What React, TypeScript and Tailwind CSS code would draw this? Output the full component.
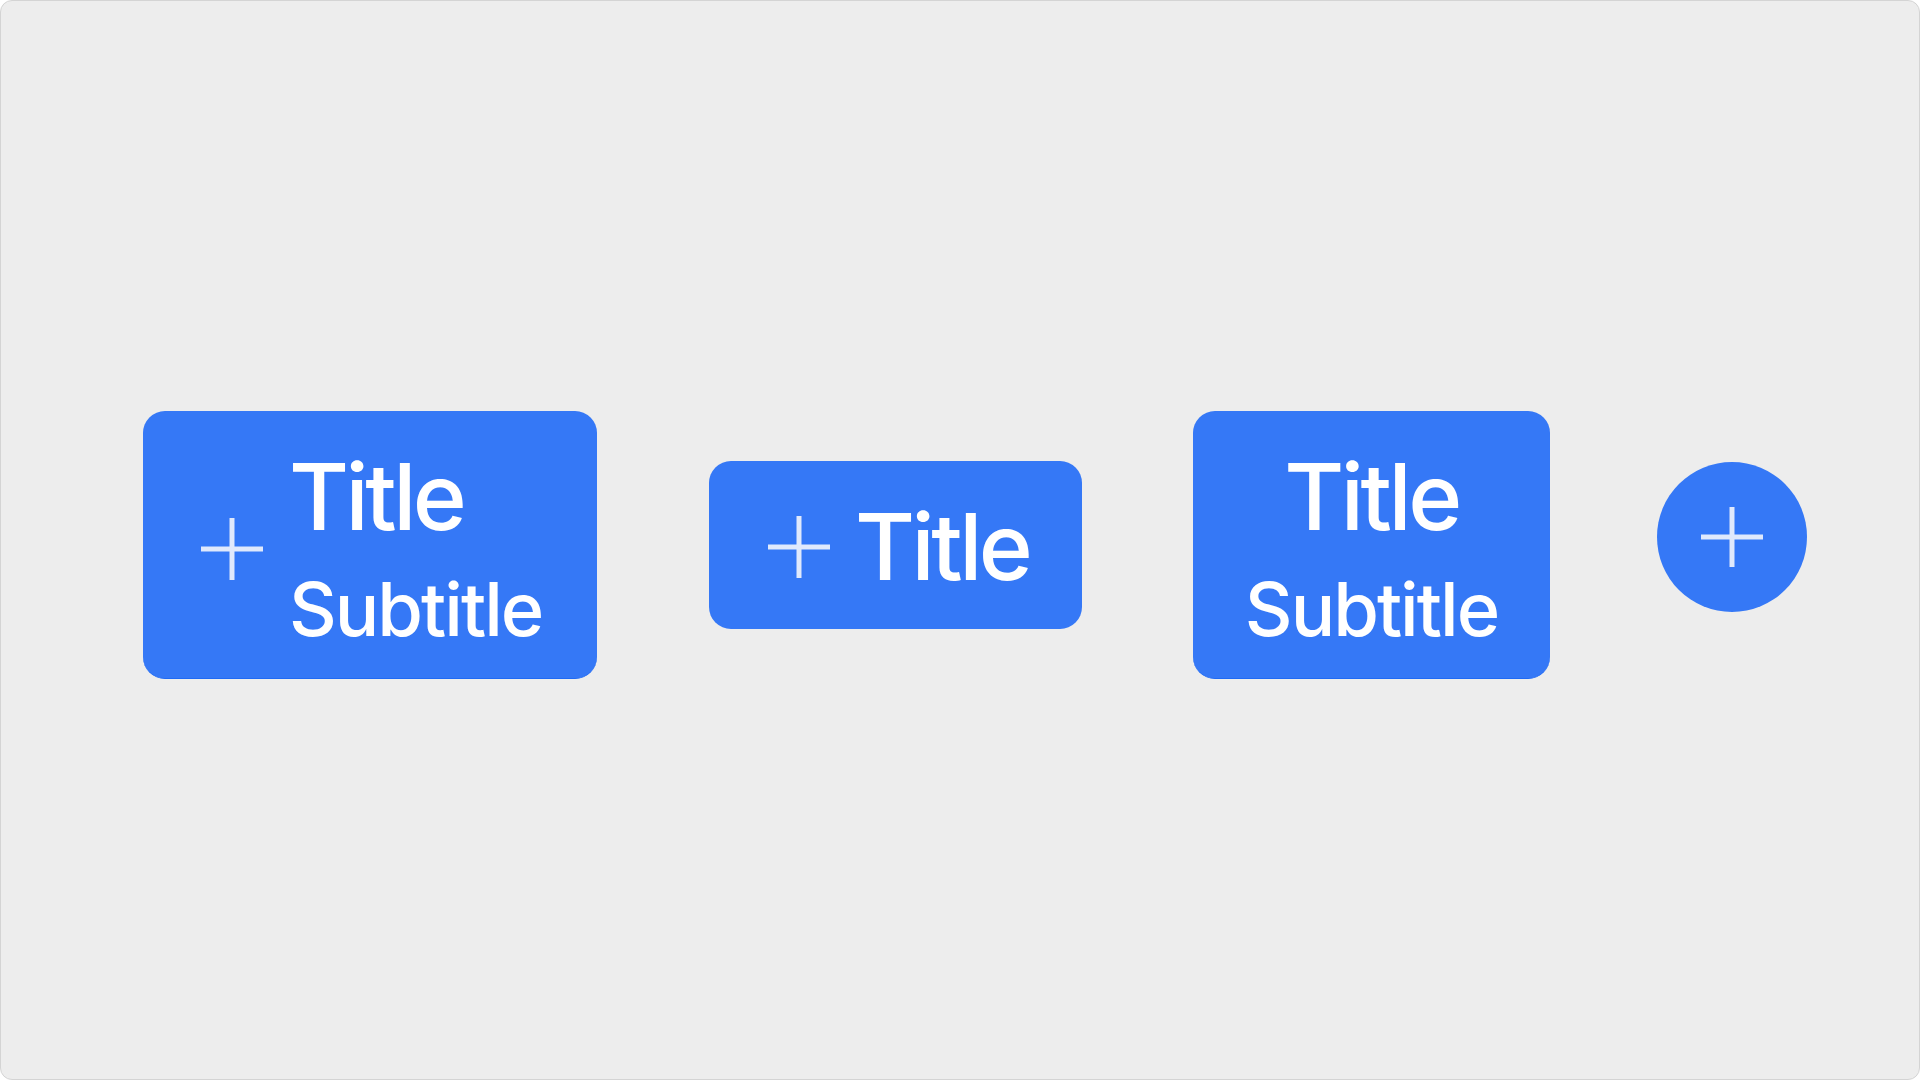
import React from "react";

const font = { fontFamily: 'Inter, "Liberation Sans", Arial, sans-serif' };

function PlusIcon() {
    return (
        <svg width="62" height="62" viewBox="0 0 62 62" className="shrink-0">
            <line x1="0" y1="31" x2="62" y2="31" stroke="#e0e9fc" strokeWidth="5" />
            <line x1="31" y1="0" x2="31" y2="62" stroke="#e0e9fc" strokeWidth="5" />
        </svg>
    );
}

function Title() {
    return <span className="block text-[92px] leading-[92px] font-medium tracking-[-3.5px] text-white">Title</span>;
}

function Subtitle() {
    return <span className="block mt-[29px] text-[74px] leading-[74px] font-medium tracking-[-2px] text-white">Subtitle</span>;
}

export default function App() {
    return (
        <div className="w-screen h-screen bg-white" style={font}>
            <div className="h-full w-full rounded-[12px] border border-[#d4d4d4] bg-[#ededed] flex items-center pl-[142px] pt-[10px]">
                <button className="w-[454px] h-[268px] rounded-[22px] bg-[#3578f6] border-b border-[#1f6af5] flex items-center pl-[58px] pt-[8px]">
                    <PlusIcon />
                    <div className="ml-[26px] text-left">
                        <Title />
                        <Subtitle />
                    </div>
                </button>

                <button className="ml-[112px] w-[373px] h-[168px] rounded-[22px] bg-[#3578f6] flex items-center pl-[59px] pt-[3px]">
                    <PlusIcon />
                    <div className="ml-[25px]">
                        <Title />
                    </div>
                </button>

                <button className="ml-[111px] w-[357px] h-[268px] rounded-[22px] bg-[#3578f6] border-b border-[#1f6af5] flex flex-col items-center justify-center pt-[8px]">
                    <Title />
                    <Subtitle />
                </button>

                <button className="ml-[107px] mb-[17px] w-[150px] h-[150px] rounded-full bg-[#3578f6] flex items-center justify-center">
                    <svg width="62" height="60" viewBox="0 0 62 60">
                        <line x1="0" y1="30" x2="62" y2="30" stroke="#e0e9fc" strokeWidth="5" />
                        <line x1="31" y1="0" x2="31" y2="60" stroke="#e0e9fc" strokeWidth="5" />
                    </svg>
                </button>
            </div>
        </div>
    );
}
